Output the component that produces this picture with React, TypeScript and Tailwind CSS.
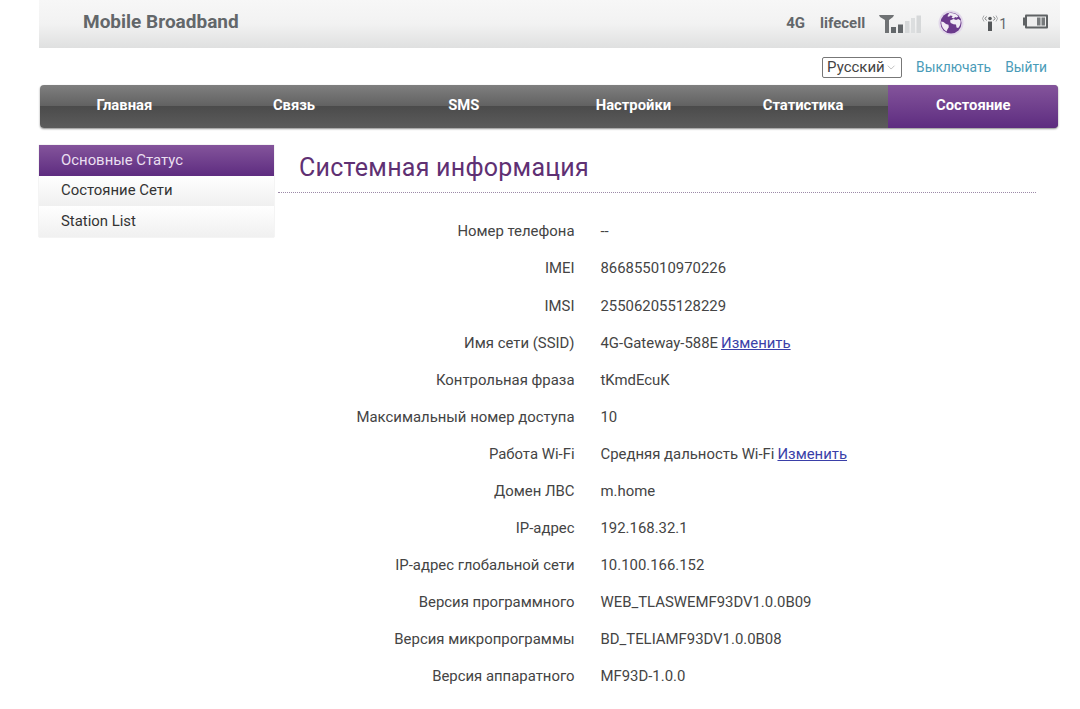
import { ChevronDown } from "lucide-react";

const tabs = ["Главная", "Связь", "SMS", "Настройки", "Статистика"];

const rows: { label: string; value: string; link?: boolean }[] = [
  { label: "Номер телефона", value: "--" },
  { label: "IMEI", value: "866855010970226" },
  { label: "IMSI", value: "255062055128229" },
  { label: "Имя сети (SSID)", value: "4G-Gateway-588E", link: true },
  { label: "Контрольная фраза", value: "tKmdEcuK" },
  { label: "Максимальный номер доступа", value: "10" },
  { label: "Работа Wi-Fi", value: "Средняя дальность Wi-Fi", link: true },
  { label: "Домен ЛВС", value: "m.home" },
  { label: "IP-адрес", value: "192.168.32.1" },
  { label: "IP-адрес глобальной сети", value: "10.100.166.152" },
  { label: "Версия программного", value: "WEB_TLASWEMF93DV1.0.0B09" },
  { label: "Версия микропрограммы", value: "BD_TELIAMF93DV1.0.0B08" },
  { label: "Версия аппаратного", value: "MF93D-1.0.0" },
];

function SignalIcon() {
  return (
    <svg width="42" height="18" viewBox="0 0 42 18">
      <path d="M0 0h15l-1 2-4 3v13H6V5L1 2z" fill="#6f7274" />
      <rect x="12" y="12" width="5" height="6" fill="#63676a" />
      <rect x="19" y="9.500" width="5" height="8.500" fill="#63676a" />
      <rect x="26" y="6" width="4.500" height="12" fill="#d6d8d9" />
      <rect x="32" y="3" width="4" height="15" fill="#dcdedf" />
      <rect x="37.500" y="0.500" width="4.500" height="17.500" fill="#d6d8d9" />
    </svg>
  );
}

function GlobeIcon() {
  return (
    <svg width="26" height="26" viewBox="0 0 26 26">
      <circle cx="13" cy="13" r="12.500" fill="#e2d8ea" />
      <circle cx="13" cy="13" r="10.500" fill="#6b3a8c" />
      <path d="M11 3.200c3-.6 7 .3 9.400 3.200l-1.600 1.200-1.800-.6-1 1.400-2.400-.6 1-1.800-2.200-.4-1.400 1.200-1.600-.6z" fill="#f1ecf5" />
      <path d="M12 10.500l3.500-1.400 2.600 1 2.200-1 2.300 1.400c.3 3-.7 5.800-2.400 7.600l-1.700-.6-.5-3-2.500-.3-2.800-1.200z" fill="#f1ecf5" />
      <path d="M3.200 11.500l2.300.5 2.500 2 2.500.8.300 2.400-1.300 2-1 2.300c-3.300-1.800-5.300-5.500-5.300-9.500z" fill="#f1ecf5" />
    </svg>
  );
}

function WifiClientIcon() {
  return (
    <svg width="16" height="16" viewBox="0 0 16 16" fill="none">
      <circle cx="8" cy="3.500" r="1.800" fill="#55585a" />
      <rect x="6" y="6.500" width="4" height="9.500" fill="#55585a" />
      <path d="M4.500 1.500 3 3.500l1.500 2M11.500 1.500 13 3.500l-1.500 2" stroke="#777a7c" strokeWidth="1" />
      <path d="M2 .5 .5 3.500 2 6.500M14 .5 15.500 3.500 14 6.500" stroke="#a9abad" strokeWidth="1" />
    </svg>
  );
}

function BatteryIcon() {
  return (
    <svg width="25" height="15" viewBox="0 0 25 15">
      <rect x="0" y="3.500" width="2" height="8" fill="#5f6264" />
      <rect x="2" y="0.500" width="23" height="14" rx="1" fill="#5f6264" />
      <rect x="4" y="2.500" width="19" height="10" fill="#eeeeee" />
      <rect x="14" y="3.500" width="3.500" height="8" fill="#777a7c" />
      <rect x="18.500" y="3.500" width="3.500" height="8" fill="#777a7c" />
    </svg>
  );
}

export default function App() {
  return (
    <div className="w-[1080px] h-[709px] overflow-hidden bg-white font-['Roboto',sans-serif] text-[14.9px] text-[#333]">
      <header className="ml-[39px] w-[1021px] h-[48px] flex items-start pl-[44px] pr-[12px] bg-gradient-to-b from-[#f7f7f7] via-[#f2f2f2] to-[#dfe0e0]">
        <div className="mt-[10px] text-[19px] leading-[24px] font-bold text-[#63676a]">Mobile Broadband</div>
        <div className="ml-auto mt-[7px] flex items-center h-[32px] text-[#63676a] font-bold text-[15px]">
          <span>4G</span>
          <span className="ml-[15px]">lifecell</span>
          <span className="ml-[14px] mt-[1px]"><SignalIcon /></span>
          <span className="ml-[17px]"><GlobeIcon /></span>
          <span className="ml-[18px] flex items-center">
            <WifiClientIcon />
            <span className="ml-[1px] mt-[2px] font-normal text-[14px]">1</span>
          </span>
          <span className="ml-[16px] -mt-[3px]"><BatteryIcon /></span>
        </div>
      </header>

      <div className="ml-[39px] w-[1019px] h-[37px] pt-[1px] flex items-center justify-end pr-[11px]">
        <div className="flex items-center h-[21px] w-[80px] px-[4px] border border-[#777] rounded-[2px] text-[15px] text-[#444]">
          Русский
          <ChevronDown className="ml-auto w-[15px] h-[15px] text-[#888]" strokeWidth={1} />
        </div>
        <a className="ml-[14px] text-[13.8px] text-[#4a9bb8]">Выключать</a>
        <a className="ml-[14px] text-[13.8px] text-[#4a9bb8]">Выйти</a>
      </div>

      <nav className="ml-[40px] w-[1018px] h-[43px] flex rounded-[4px] overflow-hidden shadow-[0_1px_2px_rgba(0,0,0,0.45)] bg-[linear-gradient(#7f7f7f_0%,#626262_48%,#4b4b4b_50%,#5c5c5c_100%)]">
        {tabs.map((t) => (
          <div key={t} className="w-[169.7px] flex items-center justify-center pb-[2px] pr-[1px] font-bold text-[14.8px] text-white">
            {t}
          </div>
        ))}
        <div className="flex-1 flex items-center justify-center pb-[2px] font-bold text-[14.8px] text-white bg-gradient-to-b from-[#84549b] to-[#5e2c80]">
          Состояние
        </div>
      </nav>

      <div className="flex mt-[17px] ml-[39px]">
        <aside className="w-[235px] self-start text-[14.9px] shadow-[0_0_1px_rgba(0,0,0,0.25)]">
          <div className="h-[31px] flex items-center pl-[22px] text-[#eadff0] bg-gradient-to-b from-[#84549b] to-[#5e2c80]">
            Основные Статус
          </div>
          <div className="h-[30px] flex items-center pl-[22px] pb-[1px] text-[#333] bg-gradient-to-b from-white to-[#f0f0f0]">
            Состояние Сети
          </div>
          <div className="h-[31px] flex items-center pl-[22px] text-[#333] bg-gradient-to-b from-white to-[#f0f0f0]">
            Station List
          </div>
        </aside>

        <main className="ml-[4px] w-[758px]">
          <h1 className="pl-[21px] h-[48px] pt-[6px] text-[25px] leading-[34px] tracking-[0.25px] text-[#5f3073] border-b border-dotted border-[#9c8aa8]">
            Системная информация
          </h1>
          <div className="mt-[20px]">
            {rows.map((r) => (
              <div key={r.label} className="flex h-[37.1px] items-center">
                <div className="w-[296.5px] text-right text-[#444]">{r.label}</div>
                <div className="ml-[26px] text-[#444]">
                  {r.value}
                  {r.link && <a className="ml-[3px] text-[#3a3fa8] underline">Изменить</a>}
                </div>
              </div>
            ))}
          </div>
        </main>
      </div>
    </div>
  );
}
